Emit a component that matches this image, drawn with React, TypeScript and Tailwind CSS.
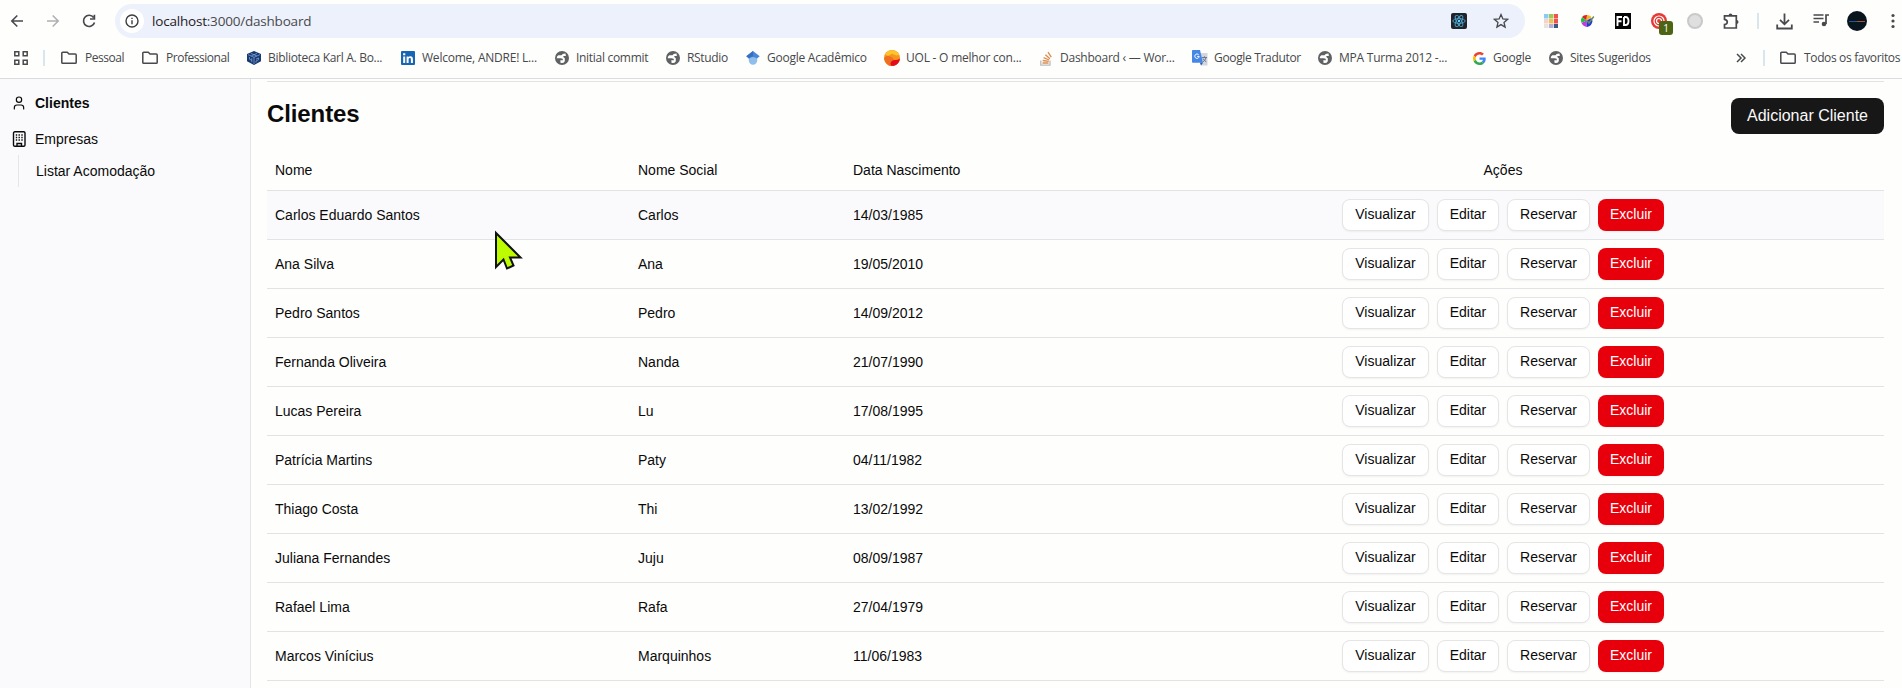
import React from "react";
import { User } from "lucide-react";

const clients = [
  ["Carlos Eduardo Santos", "Carlos", "14/03/1985"],
  ["Ana Silva", "Ana", "19/05/2010"],
  ["Pedro Santos", "Pedro", "14/09/2012"],
  ["Fernanda Oliveira", "Nanda", "21/07/1990"],
  ["Lucas Pereira", "Lu", "17/08/1995"],
  ["Patrícia Martins", "Paty", "04/11/1982"],
  ["Thiago Costa", "Thi", "13/02/1992"],
  ["Juliana Fernandes", "Juju", "08/09/1987"],
  ["Rafael Lima", "Rafa", "27/04/1979"],
  ["Marcos Vinícius", "Marquinhos", "11/06/1983"],
];

const Folder = () => (
  <svg width="16" height="14" viewBox="0 0 16 14" fill="none" stroke="#47494c" strokeWidth="1.5" strokeLinejoin="round">
    <path d="M.8 2V11.4q0 .9.9.9H14.3q.9 0 .9-.9V4q0-.9-.9-.9H8L6.3 1.3H1.7Q.8 1.3.8 2.2Z" />
  </svg>
);

const Globe = () => (
  <svg width="14" height="14" viewBox="0 0 14 14">
    <circle cx="7" cy="7" r="7" fill="#5f6163" />
    <path d="M10.500 2.600Q7 2.500 6.600 4.300H3.300Q1.700 5.500 1.700 7.200H5.800Q8.200 7.200 8 9.300H5.300L5.600 12Q9 12.300 9.800 10.200 9.800 8.600 9.800 7.200 8 6.600 8.300 5.100H10.900Z" fill="#fff" />
  </svg>
);

const Library = () => (
  <svg width="14" height="14" viewBox="0 0 14 14">
    <path d="M7 0 14 3v7.2L7 14 0 10.2V3Z" fill="#173a72" />
    <path d="M1 3.6 7 6.3l6-2.7M7 6.3V13M2.5 6v2.2l2.3 1M4.8 7.2v4M9 8.2l2.5-1.3v1.8L9 10v1.6M3.8 2.4l6 2.6M10 2.4 4.4 4.9" fill="none" stroke="#8fb0df" strokeWidth=".7" />
  </svg>
);

const LinkedIn = () => (
  <svg width="14" height="14" viewBox="0 0 14 14">
    <rect width="14" height="14" rx="1" fill="#1666b4" />
    <path d="M2.2 5.4h2V12h-2zM2.1 2.2h2.2v2H2.1zM5.6 5.4h1.9v.9c.9-1.6 4.4-1.5 4.4 1.6V12h-2V8.6c0-2.1-2.3-1.9-2.3 0V12h-2z" fill="#fff" />
  </svg>
);

const Scholar = () => (
  <svg width="14" height="14" viewBox="0 0 14 14">
    <path d="M2.8 6h8.4v3.6a4.2 4.2 0 0 1-8.4 0Z" fill="#8fbdec" />
    <path d="M7 0 .3 5.2 3 7.500q4-3.200 8 0l2.700-2.300Z" fill="#4a86d8" />
    <path d="M7 0v5.200Q4.400 5.400 3 7.500L.3 5.200Z" fill="#356fc4" />
  </svg>
);

const Uol = () => (
  <svg width="16" height="16" viewBox="0 0 16 16">
    <circle cx="8" cy="8" r="8" fill="#f7941d" />
    <path d="M1 4.300A8 8 0 0 1 15.300 5L12.500 5.600 8 3.800 4 6Z" fill="#fbc52f" />
    <path d="M0 8.500Q2 5 5 6q4 1 5 4l-1 6Q6 16.300 4 15 .6 12.500 0 8.500Z" fill="#ef6f20" />
    <path d="M16 8.500Q15.500 14 10 15.800 6 16.400 6.500 13q1-2.800 4-3 3 .2 5.500-1.500Z" fill="#e50b1b" />
  </svg>
);

const Stack = () => (
  <svg width="13" height="15" viewBox="0 0 13 15" fill="none">
    <path d="M.8 9.500V14.200H10V9.500" stroke="#b9bbbe" strokeWidth="1.300" />
    <path d="M2.500 12H8.500M2.700 9.500l6 .8M3.600 6.700l5.500 2.300M5.400 3.700l4.500 4M8 1.200l3.300 5" stroke="#dc8a4c" strokeWidth="1.300" />
  </svg>
);

const Translate = () => (
  <svg width="16" height="16" viewBox="0 0 16 16">
    <path d="M6 3h9.500v12.500H9Z" fill="#d3d6da" />
    <path d="M10 7.500h5M12.500 6.300v1.200M14 7.800q-.6 2.500-3 4M11 8.500q1 2 3.300 3.300" stroke="#66788f" fill="none" />
    <path d="M.7 0H8l3 12.700H.7Q0 12.700 0 12V.7Q0 0 .7 0Z" fill="#4687e6" />
    <path d="M8 12.700h3L9 15.500Z" fill="#2a58b8" />
    <path d="M6.700 4.800A2.200 2.200 0 1 0 7.200 6.400H5.200" stroke="#fff" strokeWidth="1" fill="none" />
  </svg>
);

const Google = () => (
  <svg width="13" height="13" viewBox="0 0 48 48">
    <path fill="#EA4335" d="M24 9.500c3.540 0 6.710 1.220 9.210 3.600l6.850-6.850C35.900 2.380 30.470 0 24 0 14.620 0 6.510 5.380 2.560 13.220l7.980 6.190C12.430 13.720 17.740 9.500 24 9.500z" />
    <path fill="#4285F4" d="M46.980 24.550c0-1.570-.15-3.090-.38-4.550H24v9.020h12.940c-.58 2.960-2.260 5.480-4.780 7.180l7.730 6c4.510-4.180 7.090-10.360 7.090-17.650z" />
    <path fill="#FBBC05" d="M10.530 28.590c-.48-1.450-.76-2.990-.76-4.590s.27-3.140.76-4.590l-7.980-6.190C.92 16.460 0 20.120 0 24c0 3.880.92 7.540 2.560 10.780l7.970-6.190z" />
    <path fill="#34A853" d="M24 48c6.480 0 11.930-2.130 15.890-5.810l-7.730-6c-2.150 1.450-4.920 2.300-8.160 2.300-6.260 0-11.570-4.220-13.470-9.910l-7.980 6.190C6.510 42.620 14.620 48 24 48z" />
  </svg>
);

const bookmarks = [
  { icon: <Folder />, text: "Pessoal", box: "w-[81px] gap-2", label: "tracking-[-0.45px]" },
  { icon: <Folder />, text: "Professional", box: "w-[104px] gap-2", label: "tracking-[-0.47px]" },
  { icon: <Library />, text: "Biblioteca Karl A. Bo...", box: "w-[154px] gap-1.5", label: "tracking-[-0.3px]" },
  { icon: <LinkedIn />, text: "Welcome, ANDRE! L...", box: "w-[154px] gap-1.5", label: "tracking-[-0.22px]" },
  { icon: <Globe />, text: "Initial commit", box: "w-[111px] gap-1.5", label: "tracking-[-0.3px]" },
  { icon: <Globe />, text: "RStudio", box: "w-[80px] gap-1.5", label: "tracking-[-0.35px]" },
  { icon: <Scholar />, text: "Google Acadêmico", box: "w-[139px] gap-1.5", label: "tracking-[-0.25px]" },
  { icon: <Uol />, text: "UOL - O melhor con...", box: "w-[154px] gap-1.5", label: "tracking-[-0.22px]" },
  { icon: <Stack />, text: "Dashboard ‹ — Wor...", box: "w-[154px] gap-1.5", label: "tracking-[-0.25px]" },
  { icon: <Translate />, text: "Google Tradutor", box: "w-[125px] gap-1.5", label: "tracking-[-0.33px]" },
  { icon: <Globe />, text: "MPA Turma 2012 -...", box: "w-[154px] gap-1.5", label: "tracking-[-0.22px]" },
  { icon: <Google />, text: "Google", box: "w-[77px] gap-1.5", label: "tracking-[-0.25px]" },
  { icon: <Globe />, text: "Sites Sugeridos", box: "w-[188px] gap-1.5", label: "tracking-[-0.27px]" },
];

export default function App() {
  return (
    <div className="h-[688px] w-[1902px] overflow-hidden bg-[#fefefd] font-['Liberation_Sans',Arial,sans-serif] text-[#0a0a0a]">
      <Browser />
      <div className="flex h-[609px]">
        <Sidebar />
        <Main />
      </div>
    </div>
  );
}

function Browser() {
  return (
    <header className="h-[79px] border-b border-[#dadce0] font-['Open_Sans','Noto_Sans',sans-serif] text-[#46484b]">
      <div className="flex h-[42px] items-center pl-[9px]">
        <svg width="16" height="16" viewBox="0 0 16 16" fill="none" stroke="#47494c" strokeWidth="1.6"><path d="M14 8H3M8.300 2.500 2.800 8l5.500 5.500" /></svg>
        <svg className="ml-5" width="16" height="16" viewBox="0 0 16 16" fill="none" stroke="#aeb0b2" strokeWidth="1.6"><path d="M2 8h11M7.700 2.500 13.200 8l-5.500 5.500" /></svg>
        <svg className="ml-5" width="16" height="16" viewBox="0 0 16 16" fill="none" stroke="#47494c" strokeWidth="1.7"><path d="M12.600 4.500A5.600 5.600 0 1 0 13.500 9.400M13.400 1.700V6H9" /></svg>
        <div className="ml-[18px] flex h-[34px] w-[1410px] items-center rounded-full bg-[#edf1fb] pl-[5px]">
          <div className="flex size-6 items-center justify-center rounded-full bg-white">
            <svg width="14" height="14" viewBox="0 0 14 14" fill="none" stroke="#3c3e41" strokeWidth="1.400"><circle cx="7" cy="7" r="6" /><path d="M7 6.200V10.200M7 3.700V5.100" /></svg>
          </div>
          <span className="ml-2 w-[160px] whitespace-nowrap text-[13.500px] tracking-[-0.2px] text-[#47494c]"><span className="text-[#1f2023]">localhost</span>:3000/dashboard</span>
          <svg className="ml-[1139px]" width="16" height="16" viewBox="0 0 16 16"><rect width="16" height="16" rx="2" fill="#20232a" /><g fill="none" stroke="#4ba3cf" strokeWidth=".9"><ellipse cx="8" cy="8" rx="6.200" ry="2.400" /><ellipse cx="8" cy="8" rx="6.200" ry="2.400" transform="rotate(60 8 8)" /><ellipse cx="8" cy="8" rx="6.200" ry="2.400" transform="rotate(120 8 8)" /></g><circle cx="8" cy="8" r="1.200" fill="#61dafb" /></svg>
          <svg className="ml-[26px]" width="16" height="16" viewBox="0 0 16 16" fill="none" stroke="#47494c" strokeWidth="1.300"><path d="m8 1.500 1.900 4.400 4.700.4-3.600 3.100 1.100 4.700L8 11.600l-4.100 2.500L5 9.400 1.400 6.300l4.700-.4Z" /></svg>
        </div>
        <Extensions />
      </div>
      <div className="flex h-8 items-center pl-[14px] text-[12px]">
        <svg width="14" height="14" viewBox="0 0 14 14" fill="none" stroke="#47494c" strokeWidth="1.500"><path d="M.8.8h4v4h-4zM9.200.8h4v4h-4zM.8 9.200h4v4h-4zM9.200 9.200h4v4h-4z" /></svg>
        <div className="ml-[15px] mr-[16px] h-4 w-0.5 bg-[#d9e6ee]" />
        {bookmarks.map((b) => (
          <div key={b.text} className={`flex shrink-0 items-center ${b.box}`}>
            <span className="flex w-4 shrink-0 justify-center">{b.icon}</span>
            <span className={`whitespace-nowrap ${b.label}`}>{b.text}</span>
          </div>
        ))}
        <svg width="10" height="10" viewBox="0 0 10 10" fill="none" stroke="#47494c" strokeWidth="1.500"><path d="m1 1 4 4-4 4M5 1l4 4-4 4" /></svg>
        <div className="ml-[17px] mr-[15px] h-4 w-0.5 shrink-0 bg-[#d9e6ee]" />
        <span className="w-4 shrink-0"><Folder /></span>
        <span className="ml-2 whitespace-nowrap tracking-[-0.35px]">Todos os favoritos</span>
      </div>
    </header>
  );
}

function Extensions() {
  return (
    <div className="ml-[19px] flex items-center">
      <svg width="14" height="14" viewBox="0 0 14 14"><path fill="#86ccf5" d="M0 0h4.500v4.500H0z" /><path fill="#a4c655" d="M5 0h4.500v4.500H5z" /><path fill="#ef5350" d="M10 0h4v4.500h-4zM10 5h4v4.500h-4z" /><path fill="#f5d3cc" d="M0 5h4.500v4.500H0z" /><path fill="#eec05c" d="M5 5h4.500v4.500H5z" /><path fill="#e6e4dc" d="M0 10h4.500v4H0z" /><path fill="#b5aed2" d="M5 10h4.500v4H5z" /><path fill="#3f5880" d="M10 10h4v4h-4z" /></svg>
      <svg className="ml-[22px]" width="15" height="14" viewBox="0 0 15 14"><path fill="#e01e2b" d="M6.500 6.500 2 3Q3.500.8 7 1Z" /><path fill="#f5b81d" d="M6.500 6.500 7 1q3.500 0 4.500 2.500Z" /><path fill="#20c13b" d="M6.500 6.500 2 3Q0 6 1.500 9Z" /><path fill="#c03bd8" d="M6.500 6.500 1.500 9Q3 12.500 7 13Z" /><path fill="#1c3cd8" d="M6.500 6.500 7 13q5-1 5.500-6L11.500 4Z" /><path d="m7 6.500 2 2.500L13.800 2.500" stroke="#6d8a58" strokeWidth="1.400" fill="none" /></svg>
      <svg className="ml-[20px]" width="16" height="16" viewBox="0 0 16 16"><path fill="#050505" d="M0 0h16v16H0z" /><path d="M2.500 13V4H7M2.500 8.300H6.500M9 4v8h1.500q3 0 3-4t-3-4H9" stroke="#fff" strokeWidth="1.900" fill="none" /></svg>
      <div className="relative ml-[20px]">
        <svg width="16" height="16" viewBox="0 0 16 16"><circle cx="8" cy="8" r="8" fill="#e43a35" /><path d="M8 13A5 5 0 1 1 13 8M8 10.500A2.500 2.500 0 1 1 10.500 8" fill="none" stroke="#fff" strokeWidth="1.200" /></svg>
        <span className="absolute left-2 top-2 flex h-[14px] w-[14px] items-center justify-center rounded-[3px] bg-[#4d6414] text-[10px] text-white">1</span>
      </div>
      <div className="ml-[20px] size-4 rounded-full border-2 border-[#c9c9c9] bg-[#dfdfdf]" />
      <svg className="ml-[20px]" width="17" height="17" viewBox="0 0 17 17" fill="none" stroke="#47494c" strokeWidth="1.700"><path d="M1.500 2.800H13.300V15H1.500V11.500Q4.300 11 4.300 8.900T1.500 6.300Z" /><path d="M5.600 2.500a1.900 1.900 0 0 1 3.800 0ZM13.600 7a1.900 1.900 0 0 1 0 3.800Z" fill="#47494c" stroke="none" /></svg>
      <div className="ml-[17px] h-4 w-0.5 bg-[#d9e6ee]" />
      <svg className="ml-[17px]" width="17" height="17" viewBox="0 0 17 17" fill="none" stroke="#47494c" strokeWidth="1.800"><path d="M8.500.5V11M4 6.800l4.500 4.500L13 6.800M1.200 11.500v4h14.600v-4" /></svg>
      <svg className="ml-[20px] -mt-0.5" width="17" height="14" viewBox="0 0 17 14" fill="none" stroke="#47494c" strokeWidth="1.700"><path d="M.5 2h10M.5 5.500h10M.5 9H6M13 11V2H16" /><circle cx="11" cy="11" r="2.300" fill="#47494c" stroke="none" /></svg>
      <div className="ml-[17px] flex size-5 items-center justify-center rounded-full bg-[#08151f]"><div className="flex h-px w-4 bg-[#28578f]"><div className="ml-auto h-px w-2 bg-[#a5562c]" /></div></div>
      <svg className="ml-[24px]" width="4" height="16" viewBox="0 0 4 16" fill="#47494c"><circle cx="2" cy="2.500" r="1.600" /><circle cx="2" cy="8" r="1.600" /><circle cx="2" cy="13.500" r="1.600" /></svg>
    </div>
  );
}

function Sidebar() {
  return (
    <aside className="h-full w-[251px] shrink-0 border-r border-[#e5e5e5] bg-[#fafafc] text-sm">
      <div className="flex h-12 items-center gap-2 pl-[11px] font-bold">
        <User size={16} strokeWidth={1.8} />
        <span>Clientes</span>
      </div>
      <div className="flex h-6 items-center gap-2 pl-[11px]">
        <svg width="16" height="16" viewBox="0 0 16 16" fill="none" stroke="#0a0a0a" strokeWidth="1.400"><rect x="2.500" y=".8" width="11.500" height="14.400" rx="1.300" /><path d="M6 15v-2.500h4.500V15" /><path d="M4.800 4h1.400M7.500 4h1.400M10.300 4h1.400M4.800 6.500h1.400M7.500 6.500h1.400M10.300 6.500h1.400M4.800 9h1.400M7.500 9h1.400M10.300 9h1.400" strokeWidth="1.300" /></svg>
        <span>Empresas</span>
      </div>
      <div className="ml-[18px] mt-1 flex h-8 items-center border-l border-[#e5e5e5] pl-[17px]">Listar Acomodação</div>
    </aside>
  );
}

const outline = "flex h-8 items-center justify-center rounded-lg border border-[#e5e5e5] bg-white pb-0.5 shadow-xs";

function Main() {
  return (
    <main className="w-[1651px] pl-4 pr-[18px] pt-0.5">
      <div className="h-px bg-[#e2e3e4]" />
      <div className="flex h-[68px] items-start justify-between pt-4">
        <h1 className="text-2xl leading-8 font-bold tracking-[-0.1px]">Clientes</h1>
        <button className="h-9 w-[153px] rounded-lg bg-[#171717] text-base text-[#fafafa]">Adicionar Cliente</button>
      </div>
      <table className="w-full table-fixed border-separate border-spacing-0 text-sm">
        <colgroup>
          <col className="w-[363px]" /><col className="w-[215px]" /><col className="w-[277px]" /><col />
        </colgroup>
        <thead>
          <tr className="h-[41px] text-left *:border-b *:border-[#e2e3e4] *:px-2 *:pb-px *:font-normal">
            <th>Nome</th>
            <th>Nome Social</th>
            <th>Data Nascimento</th>
            <th className="text-center">Ações</th>
          </tr>
        </thead>
        <tbody>
          {clients.map(([name, social, birth], i) => (
            <tr key={name} className={`h-[49px] *:border-b *:border-[#e2e3e4] *:px-2 *:py-0 ${i === 0 ? "bg-[#fafafc]" : ""}`}>
              <td>{name}</td>
              <td>{social}</td>
              <td>{birth}</td>
              <td>
                <div className="flex justify-center gap-2">
                  <button className={`w-[87px] ${outline}`}>Visualizar</button>
                  <button className={`w-[62px] ${outline}`}>Editar</button>
                  <button className={`w-[83px] ${outline}`}>Reservar</button>
                  <button className="flex h-8 w-[66px] items-center justify-center rounded-lg bg-[#e7000b] pb-0.5 text-white shadow-xs">Excluir</button>
                </div>
              </td>
            </tr>
          ))}
        </tbody>
      </table>
      <svg className="absolute left-[494px] top-[230px]" width="30" height="42" viewBox="0 0 30 42">
        <path d="M2 3V37L9.500 29.500 13 38.500 19.500 35.500 16 27.500H26.500Z" fill="#bdfb00" stroke="#111" strokeWidth="2" />
      </svg>
    </main>
  );
}
